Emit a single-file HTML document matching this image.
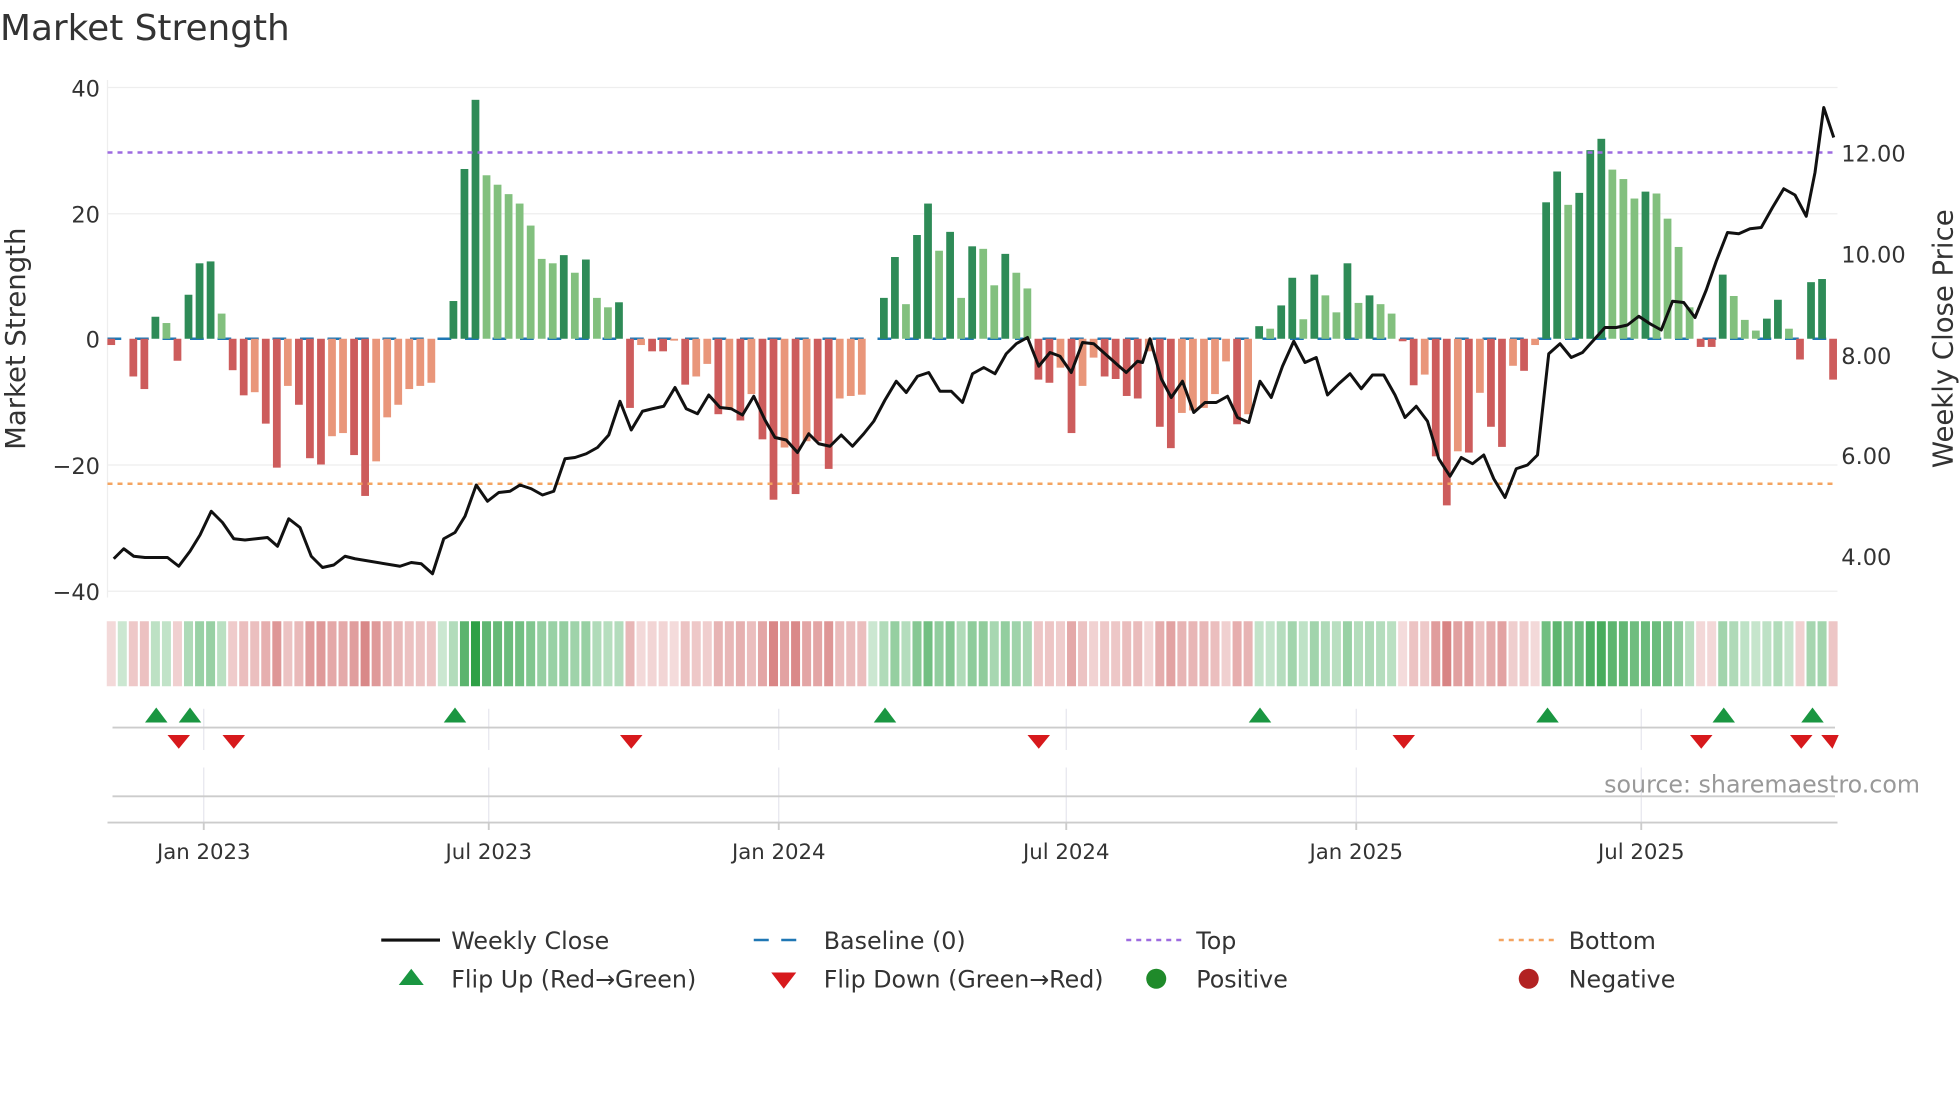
<!DOCTYPE html>
<html><head><meta charset="utf-8"><style>
html,body{margin:0;padding:0;background:#fff;width:1960px;height:1102px;overflow:hidden}
svg{display:block}
text{font-family:"DejaVu Sans","Liberation Sans",sans-serif;fill:#333}
</style></head><body>
<svg id="s" width="1960" height="1102" viewBox="0 0 1568 881.6" xmlns="http://www.w3.org/2000/svg">
<text x="0" y="32" font-size="28.7">Market Strength</text>
<g stroke="#eee" stroke-width="1">
<line x1="86" y1="70" x2="1470" y2="70"/><line x1="86" y1="171" x2="1470" y2="171"/>
<line x1="86" y1="372" x2="1470" y2="372"/><line x1="86" y1="473" x2="1470" y2="473"/>
<line x1="86" y1="64" x2="86" y2="478"/>
</g>
<g font-size="18" text-anchor="end">
<text x="80" y="77">40</text><text x="80" y="178">20</text><text x="80" y="278">0</text>
<text x="80" y="379">−20</text><text x="80" y="480">−40</text>
</g>
<g font-size="18">
<text x="1473" y="129">12.00</text><text x="1473" y="210">10.00</text><text x="1473" y="291">8.00</text>
<text x="1473" y="371">6.00</text><text x="1473" y="452">4.00</text>
</g>
<text transform="translate(20,271) rotate(-90)" font-size="22" text-anchor="middle">Market Strength</text>
<text transform="translate(1562,271) rotate(-90)" font-size="22" text-anchor="middle">Weekly Close Price</text>
<line x1="86" y1="271" x2="1470" y2="271" stroke="#1f77b4" stroke-width="2" stroke-dasharray="11,11"/>
<g id="bars"></g>
<line x1="86" y1="122" x2="1470" y2="122" stroke="#9d6be0" stroke-width="2" stroke-dasharray="4,4"/>
<line x1="86" y1="387" x2="1470" y2="387" stroke="#f4a460" stroke-width="2" stroke-dasharray="4,4"/>
<polyline id="price" fill="none" stroke="#111" stroke-width="2.4" stroke-linejoin="round"/>
<g id="heat"></g>
<g stroke="#e6e6ee" stroke-width="1">
<line x1="163" y1="567" x2="163" y2="600"/><line x1="391" y1="567" x2="391" y2="600"/><line x1="623" y1="567" x2="623" y2="600"/><line x1="853" y1="567" x2="853" y2="600"/><line x1="1085" y1="567" x2="1085" y2="600"/><line x1="1313" y1="567" x2="1313" y2="600"/>
<line x1="163" y1="614" x2="163" y2="658"/><line x1="391" y1="614" x2="391" y2="658"/><line x1="623" y1="614" x2="623" y2="658"/><line x1="853" y1="614" x2="853" y2="658"/><line x1="1085" y1="614" x2="1085" y2="658"/><line x1="1313" y1="614" x2="1313" y2="658"/>
</g>
<g stroke="#ccc" stroke-width="1.5">
<line x1="90" y1="582" x2="1468" y2="582"/><line x1="90" y1="637" x2="1468" y2="637"/><line x1="86" y1="658" x2="1470" y2="658"/>
<line x1="163" y1="658" x2="163" y2="664"/><line x1="391" y1="658" x2="391" y2="664"/><line x1="623" y1="658" x2="623" y2="664"/><line x1="853" y1="658" x2="853" y2="664"/><line x1="1085" y1="658" x2="1085" y2="664"/><line x1="1313" y1="658" x2="1313" y2="664"/>
</g>
<g id="flips"></g>
<text x="1536" y="634" font-size="19" text-anchor="end" style="fill:#999">source: sharemaestro.com</text>
<g font-size="17" text-anchor="middle">
<text x="163" y="687">Jan 2023</text><text x="391" y="687">Jul 2023</text><text x="623" y="687">Jan 2024</text>
<text x="853" y="687">Jul 2024</text><text x="1085" y="687">Jan 2025</text><text x="1313" y="687">Jul 2025</text>
</g>
<g font-size="19">
<line x1="305" y1="752" x2="352" y2="752" stroke="#111" stroke-width="2.5"/><text x="361" y="759">Weekly Close</text>
<line x1="603" y1="752" x2="645" y2="752" stroke="#1f77b4" stroke-width="2" stroke-dasharray="12,10"/><text x="659" y="759">Baseline (0)</text>
<line x1="901" y1="752" x2="945" y2="752" stroke="#9d6be0" stroke-width="2" stroke-dasharray="4,4"/><text x="957" y="759">Top</text>
<line x1="1199" y1="752" x2="1243" y2="752" stroke="#f4a460" stroke-width="2" stroke-dasharray="4,4"/><text x="1255" y="759">Bottom</text>
<polygon points="319,788 339,788 329,775" fill="#1a9641"/><text x="361" y="790">Flip Up (Red→Green)</text>
<polygon points="617,778 637,778 627,791" fill="#d7191c"/><text x="659" y="790">Flip Down (Green→Red)</text>
<circle cx="925" cy="783" r="8" fill="#1f8a2a"/><text x="957" y="790">Positive</text>
<circle cx="1223" cy="783" r="8" fill="#b22222"/><text x="1255" y="790">Negative</text>
</g>
</svg>
<script>
var v=[-1,0,-6,-8,3.5,2.5,-3.5,7,12,12.3,
4,-5,-9,-8.5,-13.5,-20.5,-7.5,-10.5,-19,-20,
-15.5,-15,-18.5,-25,-19.5,-12.5,-10.5,-8,-7.5,-7,
0,6,27,38,26,24.5,23,21.5,18,12.7,
12,13.3,10.5,12.6,6.5,5,5.8,-11,-1,-2,
-2,-0.3,-7.3,-6,-4,-12,-11,-13,-8.8,-16,
-25.6,-17.3,-24.7,-16.3,-16.3,-20.7,-9.5,-9.1,-8.9,0,
6.5,13,5.5,16.5,21.5,14,17,6.5,14.7,14.3,8.5,13.5,10.5,8,
-6.5,-7,-4.6,-15,-7.5,-3,-6,-6.4,-9.1,-9.5,-2,-14,-17.4,-11.8,-11.4,-11,-8.8,-3.6,-13.6,-12,
2,1.6,5.3,9.7,3.1,10.2,6.9,4.2,12,5.7,6.9,5.5,4.0,-0.4,-7.4,-5.7,-18.7,-26.5,-17.9,-18.1,-8.6,-14,-17.2,-4.3,-5.1,-1,
21.7,26.6,21.3,23.2,30,31.8,26.9,25.4,22.3,23.4,23.1,19.1,14.6,5.0,-1.3,-1.3,10.2,6.8,3.0,1.3,3.2,6.2,1.6,-3.3,9.0,9.5,-6.5];
var NS="http://www.w3.org/2000/svg",b=document.getElementById("bars"),h=document.getElementById("heat");
function r(g,x,y,w,hh,f){var e=document.createElementNS(NS,"rect");e.setAttribute("x",x);e.setAttribute("y",y);e.setAttribute("width",w);e.setAttribute("height",hh);e.setAttribute("fill",f);g.appendChild(e);}
var st=8.83;
for(var i=0;i<v.length;i++){var c=89+i*st,a=v[i],p=i?v[i-1]:0,col;
 if(a>=0)col=(a>=p)?"#2e8b57":"#82c07e";else col=(a<=p)?"#cd5c5c":"#e9967a";
 if(Math.abs(a)>0.2){var y=a>0?271-a*5.03:271,hh=Math.abs(a)*5.03;r(b,c-3.1,y,6.2,hh,col);}
 var al,hc;if(a>=0){al=0.25+0.75*Math.min(a/38,1);hc="rgba(46,160,70,"+al+")";}else{al=0.2+0.5*Math.min(-a/26,1);hc="rgba(200,80,80,"+al+")";}
 r(h,c-3.6,497,7.2,52,hc);}
var pts=[[91,447],[99,439],[107,445],[116,446],[125,446],[134,446],[143,453],[152,441],[160,428],[169,409],[178,418],[187,431],[196,432],[205,431],[214,430],[222,437],[231,415],[240,422],[249,445],[258,454],[267,452],[276,445],[284,447],[320,453],[329,450],[337,451],[346,459],[355,431],[364,426],[372,413],[381,388],[390,401],[399,394],[408,393],[416,388],[425,391],[434,396],[443,393],[452,367],[460,366],[469,363],[478,358],[487,348],[496,321],[505,344],[514,329],[522,327],[531,325],[540,310],[549,327],[558,331],[567,316],[576,326],[585,327],[594,332],[603,317],[612,336],[620,350],[629,352],[638,362],[647,347],[655,355],[664,357],[673,348],[682,357],[691,347],[699,337],[708,320],[717,305],[725,314],[734,301],[743,298],[752,313],[761,313],[770,322],[778,299],[787,294],[796,299],[805,283],[813,275],[822,270],[831,293],[840,282],[848,285],[857,298],[866,274],[875,275],[884,283],[893,291],[901,298],[910,289],[914,290],[920,271],[929,303],[937,318],[946,305],[955,330],[964,322],[973,322],[982,317],[990,334],[999,338],[1008,305],[1017,318],[1026,293],[1035,273],[1044,290],[1053,286],[1062,316],[1071,307],[1080,299],[1089,311],[1098,300],[1107,300],[1116,316],[1124,334],[1133,325],[1142,337],[1151,367],[1160,381],[1169,366],[1178,371],[1187,364],[1195,383],[1204,398],[1213,375],[1222,372],[1230,364],[1239,283],[1248,275],[1257,286],[1266,282],[1275,272],[1284,262],[1293,262],[1302,260],[1311,253],[1320,259],[1329,264],[1338,241],[1347,242],[1356,254],[1365,232],[1373,209],[1382,186],[1391,187],[1400,183],[1409,182],[1418,166],[1427,151],[1436,156],[1445,173],[1452,138],[1459,86],[1467,110]];
document.getElementById("price").setAttribute("points",pts.map(function(q){return q.join(",")}).join(" "));
var f=document.getElementById("flips");
[125,152,364,708,1008,1238,1379,1450].forEach(function(x){var e=document.createElementNS(NS,"polygon");e.setAttribute("points",(x-9)+",578 "+(x+9)+",578 "+x+",566");e.setAttribute("fill","#1a9641");f.appendChild(e);});
[143,187,505,831,1123,1361,1441,1466].forEach(function(x){var e=document.createElementNS(NS,"polygon");e.setAttribute("points",(x-9)+",588 "+(Math.min(x+9,1471))+",588 "+x+",599");e.setAttribute("fill","#d7191c");f.appendChild(e);});
</script>
</body></html>
